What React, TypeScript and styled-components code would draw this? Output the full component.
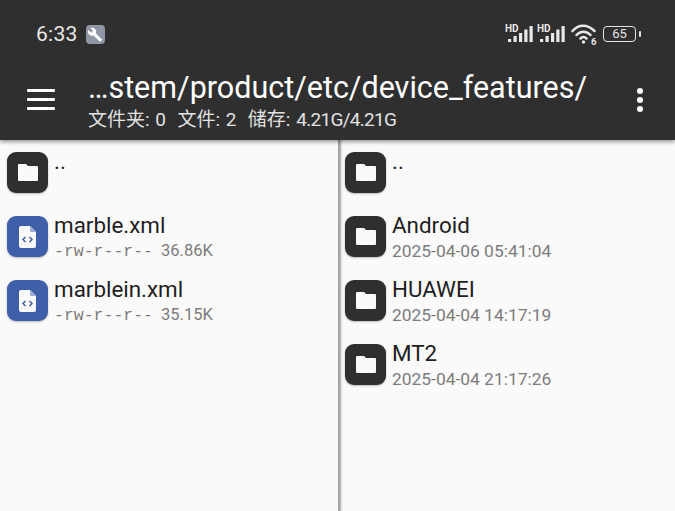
import React from "react";
import styled, { createGlobalStyle } from "styled-components";

const Global = createGlobalStyle`
  html, body { margin: 0; padding: 0; background: #fafafa; }
  body { font-family: Roboto, "Noto Sans CJK SC", sans-serif; }
`;

const Screen = styled.div`
  width: 675px;
  height: 511px;
  overflow: hidden;
  display: flex;
  flex-direction: column;
  background: #fafafa;
`;

const Header = styled.header`
  height: 140px;
  flex: none;
  position: relative;
  z-index: 1;
  background: #2f2f2f;
  color: #fff;
  display: flex;
  flex-direction: column;
  box-shadow: 0 2px 4px rgba(0, 0, 0, 0.4);
`;

const StatusBar = styled.div`
  height: 68px;
  flex: none;
  display: flex;
  align-items: center;
  padding: 0 35px 0 36px;
`;

const Clock = styled.span`
  font-size: 21px;
  color: #e9e9e9;
  letter-spacing: 0.3px;
`;

const AppBadge = styled.span`
  width: 19px;
  height: 19px;
  margin-left: 8px;
  border-radius: 4px;
  background: #8f96a5;
  display: flex;
  align-items: center;
  justify-content: center;
`;

const StatusIcons = styled.div`
  margin-left: auto;
  display: flex;
  align-items: center;
  gap: 4px;
`;

const WifiSlot = styled.div`
  display: flex;
  margin-left: 2px;
`;

const Battery = styled.div`
  width: 33px;
  height: 16px;
  box-sizing: border-box;
  border: 1.5px solid #e4e4e4;
  border-radius: 4px;
  margin: 0 4px 0 2px;
  font-size: 13px;
  line-height: 13px;
  text-align: center;
  color: #e4e4e4;
  position: relative;
  &::after {
    content: "";
    position: absolute;
    right: -5.5px;
    top: 3.5px;
    width: 2px;
    height: 6px;
    border-radius: 1px;
    background: #e4e4e4;
  }
`;

const Toolbar = styled.div`
  flex: 1;
  display: flex;
  align-items: flex-start;
  padding-left: 27px;
`;

const Burger = styled.div`
  width: 28px;
  margin-top: 21px;
  display: flex;
  flex-direction: column;
  gap: 6px;
  flex: none;
  span {
    height: 3px;
    background: #fff;
    border-radius: 1px;
  }
`;

const Titles = styled.div`
  margin-left: 33px;
  flex: 1;
`;

const Path = styled.div`
  font-size: 30.5px;
  line-height: 40px;
  color: #fff;
  white-space: nowrap;
`;

const Summary = styled.div`
  font-size: 19px;
  line-height: 24px;
  color: #e2e2e2;
  white-space: pre;
  word-spacing: 1px;
`;

const Storage = styled.span`
  letter-spacing: -0.7px;
`;

const Overflow = styled.div`
  width: 6px;
  margin: 20px 32px 0 0;
  display: flex;
  flex-direction: column;
  gap: 3px;
  span {
    width: 6px;
    height: 6px;
    border-radius: 50%;
    background: #fff;
  }
`;

const Panes = styled.main`
  flex: 1;
  display: flex;
  min-height: 0;
`;

const Pane = styled.section<{ $width: number; $inset: number }>`
  width: ${(p) => p.$width}px;
  flex: none;
  padding: 12px 0 0 ${(p) => p.$inset}px;
  box-sizing: border-box;
  background: #fafafa;
`;

const Divider = styled.div`
  width: 5px;
  flex: none;
  background: linear-gradient(to right, #9c9c9c 0, #a8a8a8 35%, #dcdcdc 65%, #fafafa 100%);
`;

const Row = styled.div`
  height: 64px;
  display: flex;
  align-items: flex-start;
`;

const Tile = styled.div<{ $file?: boolean }>`
  width: 41px;
  height: 41px;
  flex: none;
  border-radius: 9px;
  background: ${(p) => (p.$file ? "#3f5fa8" : "#2f2f2f")};
  box-shadow: 0 1px 2px rgba(0, 0, 0, 0.25);
  display: flex;
  align-items: center;
  justify-content: center;
`;

const Info = styled.div`
  margin-left: 6px;
  min-width: 0;
`;

const Name = styled.div`
  font-size: 22.4px;
  line-height: 28px;
  color: #1e1e1e;
  margin-top: -5px;
`;

const Meta = styled.div`
  font-size: 17.4px;
  line-height: 24px;
  color: #7c7c7c;
  white-space: pre;
  display: flex;
  align-items: baseline;
  gap: 8px;
`;

const Perm = styled.span`
  font-family: "Liberation Mono", monospace;
  font-size: 16.5px;
  line-height: 26px;
`;

const Size = styled.span`
  font-size: 16.5px;
`;

const Signal = () => (
  <svg width="28" height="20" viewBox="0 0 28 20">
    <text x="0" y="7.5" fontFamily="Roboto" fontWeight="700" fontSize="10" fill="#e8e8e8">HD</text>
    <rect x="3" y="15" width="3.2" height="3" fill="#e8e8e8" />
    <rect x="8.500" y="12" width="3.2" height="6" fill="#e8e8e8" />
    <rect x="14" y="9" width="3.200" height="9" fill="#e8e8e8" />
    <rect x="19.300" y="5.500" width="3.200" height="12.500" fill="#e8e8e8" />
    <rect x="24.500" y="2" width="3.200" height="16" fill="#e8e8e8" />
  </svg>
);

const Wifi = () => (
  <svg width="26" height="22" viewBox="0 0 26 22" fill="none" stroke="#e8e8e8" strokeWidth="2.5" strokeLinecap="round">
    <path d="M1.500 8 C7.500 1 16.500 1 23.500 8" />
    <path d="M5.500 12 C9.500 7.500 15.500 7.500 19.500 12" />
    <path d="M9.500 15.500 C11.500 13.500 13.500 13.500 15.500 15.500" />
    <circle cx="12.500" cy="19" r="1.700" fill="#e8e8e8" stroke="none" />
    <text x="20" y="21.500" fontFamily="Roboto" fontWeight="700" fontSize="9.500" fill="#e8e8e8" stroke="none">6</text>
  </svg>
);

const Wrench = () => (
  <svg width="15" height="15" viewBox="0 0 24 24" fill="#fff">
    <path d="M22 19.500 12.600 10.100c.9-2.400.4-5.200-1.500-7.100C9.100 1 6.100.6 3.700 1.700L8 6 5 9 .6 4.700C-.600 7.100-.100 10.100 1.900 12.100c1.900 1.900 4.700 2.400 7.100 1.500l9.400 9.400c.4.400 1 .4 1.400 0l2.600-2.100c.5-.4.500-1.100 0-1.400z" />
  </svg>
);

const FolderGlyph = () => (
  <svg width="20" height="17" viewBox="0 0 20 17">
    <path d="M1 0h7l2 2h9a1 1 0 0 1 1 1v13a1 1 0 0 1-1 1H1a1 1 0 0 1-1-1V1a1 1 0 0 1 1-1z" fill="#fafafa" />
  </svg>
);

const XmlGlyph = () => (
  <svg width="17" height="22" viewBox="0 0 17 22">
    <path d="M2 0h9l6 6v14a2 2 0 0 1-2 2H2a2 2 0 0 1-2-2V2a2 2 0 0 1 2-2z" fill="#fafafa" />
    <path d="M11 0l6 6h-6z" fill="#9fb0d6" />
    <path d="M6.500 11 4 13.500 6.500 16M10.500 11 13 13.500 10.500 16" fill="none" stroke="#3f5fa8" strokeWidth="1.500" />
  </svg>
);

type Entry = { name: string; perm?: string; meta?: string; file?: boolean };

const leftEntries: Entry[] = [
  { name: ".." },
  { name: "marble.xml", perm: "-rw-r--r--", meta: "36.86K", file: true },
  { name: "marblein.xml", perm: "-rw-r--r--", meta: "35.15K", file: true },
];

const rightEntries: Entry[] = [
  { name: ".." },
  { name: "Android", meta: "2025-04-06 05:41:04" },
  { name: "HUAWEI", meta: "2025-04-04 14:17:19" },
  { name: "MT2", meta: "2025-04-04 21:17:26" },
];

const FileRow = ({ entry }: { entry: Entry }) => (
  <Row>
    <Tile $file={entry.file}>{entry.file ? <XmlGlyph /> : <FolderGlyph />}</Tile>
    <Info>
      <Name>{entry.name}</Name>
      {entry.perm ? (
        <Meta>
          <Perm>{entry.perm}</Perm>
          <Size>{entry.meta}</Size>
        </Meta>
      ) : (
        entry.meta && <Meta>{entry.meta}</Meta>
      )}
    </Info>
  </Row>
);

export default function App() {
  return (
    <Screen>
      <Global />
      <Header>
        <StatusBar>
          <Clock>6:33</Clock>
          <AppBadge>
            <Wrench />
          </AppBadge>
          <StatusIcons>
            <Signal />
            <Signal />
            <WifiSlot>
              <Wifi />
            </WifiSlot>
            <Battery>65</Battery>
          </StatusIcons>
        </StatusBar>
        <Toolbar>
          <Burger>
            <span />
            <span />
            <span />
          </Burger>
          <Titles>
            <Path>…stem/product/etc/device_features/</Path>
            <Summary>
              文件夹: 0  文件: 2  储存: <Storage>4.21G/4.21G</Storage>
            </Summary>
          </Titles>
          <Overflow>
            <span />
            <span />
            <span />
          </Overflow>
        </Toolbar>
      </Header>
      <Panes>
        <Pane $width={338} $inset={7}>
          {leftEntries.map((e) => (
            <FileRow key={e.name} entry={e} />
          ))}
        </Pane>
        <Divider />
        <Pane $width={332} $inset={2}>
          {rightEntries.map((e) => (
            <FileRow key={e.name} entry={e} />
          ))}
        </Pane>
      </Panes>
    </Screen>
  );
}
